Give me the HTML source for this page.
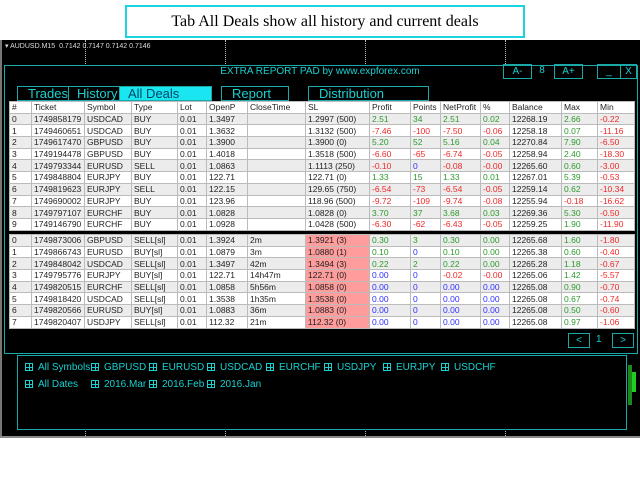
<!DOCTYPE html>
<html><head><style>
*{margin:0;padding:0;box-sizing:border-box}
body{width:640px;height:480px;background:#fff;position:relative;overflow:hidden;font-family:"Liberation Sans",sans-serif}
.a{position:absolute}
#cap{left:125px;top:5px;width:400px;height:33px;border:2px solid #19d4e0;font-family:"Liberation Serif",serif;font-size:16px;text-align:center;line-height:29px;color:#000}
#chart{left:0;top:40px;width:640px;height:398px;background:#000;border-left:2px solid #777}
.vd{width:0;border-left:1px dotted #bbb;top:40px;height:398px}
#panel{left:4px;top:65px;width:634px;height:289px;border:1px solid #1aa8a8}
.btn{border:1px solid #1aa8a8;color:#1ad0d0;font-size:10px;text-align:center;line-height:13px;height:15px}
.tab{top:86px;height:15px;border:1px solid #1aa8a8;color:#1ad0d0;font-size:13px;line-height:14px;padding-left:10px}
table{border-collapse:collapse;table-layout:fixed;font-size:8.5px;font-family:"Liberation Sans",sans-serif}
td{height:11.7px;border:1px solid #bbb;padding:0 2px;white-space:nowrap;overflow:hidden;line-height:10px;color:#222}
tr.g td{background:#ececec}
tr.w td{background:#fff}
.G{color:#2c9a2c!important}.R{color:#f02828!important}.B{color:#3030ff!important}
td.p{background:#ff9c9c!important}
.f{color:#1ad0d0;font-size:10px;top:0}
.ic{display:inline-block;width:8px;height:8px;border:1px solid #1ad0d0;position:relative;margin-right:5px;vertical-align:-1px}
.ic:before{content:"";position:absolute;left:2.5px;top:0;width:1px;height:6px;background:#1ad0d0}
.ic:after{content:"";position:absolute;top:2.5px;left:0;height:1px;width:6px;background:#1ad0d0}
</style></head><body>
<div class="a" id="cap">Tab All Deals show all history and current deals</div>
<div class="a" id="chart"></div>
<div class="a vd" style="left:85px"></div><div class="a vd" style="left:225px"></div><div class="a vd" style="left:365px"></div><div class="a vd" style="left:505px"></div>
<div class="a" style="left:5px;top:42px;color:#ddd;font-size:7px">▾ AUDUSD.M15&nbsp; 0.7142 0.7147 0.7142 0.7146</div>
<div class="a" style="left:0;top:436px;width:640px;height:2px;background:#888"></div>
<div class="a" style="left:628px;top:365px;width:4px;height:40px;background:#1a8a1a"></div>
<div class="a" style="left:632px;top:372px;width:4px;height:20px;background:#2c2"></div>
<div class="a" id="panel" style="background:#000"></div>
<div class="a" style="left:0;top:66px;width:640px;text-align:center;color:#1ad0d0;font-size:10px">EXTRA REPORT PAD by www.expforex.com</div>
<div class="a btn" style="left:503px;top:64px;width:29px">A-</div>
<div class="a" style="left:536px;top:65px;width:12px;color:#1ad0d0;font-size:10px;text-align:center">8</div>
<div class="a btn" style="left:554px;top:64px;width:29px">A+</div>
<div class="a btn" style="left:597px;top:64px;width:24px">_</div>
<div class="a btn" style="left:620px;top:64px;width:17px">X</div>
<div class="a tab" style="left:17px;width:52px">Trades</div>
<div class="a tab" style="left:68px;width:52px;padding-left:8px">History</div>
<div class="a tab" style="left:119px;width:93px;background:#19e6f0;color:#046;padding-left:8px">All Deals</div>
<div class="a tab" style="left:221px;width:68px">Report</div>
<div class="a tab" style="left:308px;width:121px">Distribution</div>
<div class="a" style="left:9px;top:101px;width:625px;height:229px;background:#000"></div>
<table class="a" style="left:9px;top:101px;width:625px">
<colgroup><col style="width:22px"><col style="width:53px"><col style="width:47px"><col style="width:46px"><col style="width:29px"><col style="width:41px"><col style="width:58px"><col style="width:64px"><col style="width:41px"><col style="width:30px"><col style="width:40px"><col style="width:29px"><col style="width:52px"><col style="width:36px"><col style="width:37px"></colgroup>
<tr class="w"><td>#</td><td>Ticket</td><td>Symbol</td><td>Type</td><td>Lot</td><td>OpenP</td><td>CloseTime</td><td>SL</td><td>Profit</td><td>Points</td><td>NetProfit</td><td>%</td><td>Balance</td><td>Max</td><td>Min</td></tr>
<tr class="g"><td>0</td><td>1749858179</td><td>USDCAD</td><td>BUY</td><td>0.01</td><td>1.3497</td><td></td><td>1.2997 (500)</td><td class="G">2.51</td><td class="G">34</td><td class="G">2.51</td><td class="G">0.02</td><td>12268.19</td><td class="G">2.66</td><td class="R">-0.22</td></tr>
<tr class="w"><td>1</td><td>1749460651</td><td>USDCAD</td><td>BUY</td><td>0.01</td><td>1.3632</td><td></td><td>1.3132 (500)</td><td class="R">-7.46</td><td class="R">-100</td><td class="R">-7.50</td><td class="R">-0.06</td><td>12258.18</td><td class="G">0.07</td><td class="R">-11.16</td></tr>
<tr class="g"><td>2</td><td>1749617470</td><td>GBPUSD</td><td>BUY</td><td>0.01</td><td>1.3900</td><td></td><td>1.3900 (0)</td><td class="G">5.20</td><td class="G">52</td><td class="G">5.16</td><td class="G">0.04</td><td>12270.84</td><td class="G">7.90</td><td class="R">-6.50</td></tr>
<tr class="w"><td>3</td><td>1749194478</td><td>GBPUSD</td><td>BUY</td><td>0.01</td><td>1.4018</td><td></td><td>1.3518 (500)</td><td class="R">-6.60</td><td class="R">-65</td><td class="R">-6.74</td><td class="R">-0.05</td><td>12258.94</td><td class="G">2.40</td><td class="R">-18.30</td></tr>
<tr class="g"><td>4</td><td>1749793344</td><td>EURUSD</td><td>SELL</td><td>0.01</td><td>1.0863</td><td></td><td>1.1113 (250)</td><td class="R">-0.10</td><td class="B">0</td><td class="R">-0.08</td><td class="R">-0.00</td><td>12265.60</td><td class="G">0.60</td><td class="R">-3.00</td></tr>
<tr class="w"><td>5</td><td>1749848804</td><td>EURJPY</td><td>BUY</td><td>0.01</td><td>122.71</td><td></td><td>122.71 (0)</td><td class="G">1.33</td><td class="G">15</td><td class="G">1.33</td><td class="G">0.01</td><td>12267.01</td><td class="G">5.39</td><td class="R">-0.53</td></tr>
<tr class="g"><td>6</td><td>1749819623</td><td>EURJPY</td><td>SELL</td><td>0.01</td><td>122.15</td><td></td><td>129.65 (750)</td><td class="R">-6.54</td><td class="R">-73</td><td class="R">-6.54</td><td class="R">-0.05</td><td>12259.14</td><td class="G">0.62</td><td class="R">-10.34</td></tr>
<tr class="w"><td>7</td><td>1749690002</td><td>EURJPY</td><td>BUY</td><td>0.01</td><td>123.96</td><td></td><td>118.96 (500)</td><td class="R">-9.72</td><td class="R">-109</td><td class="R">-9.74</td><td class="R">-0.08</td><td>12255.94</td><td class="R">-0.18</td><td class="R">-16.62</td></tr>
<tr class="g"><td>8</td><td>1749797107</td><td>EURCHF</td><td>BUY</td><td>0.01</td><td>1.0828</td><td></td><td>1.0828 (0)</td><td class="G">3.70</td><td class="G">37</td><td class="G">3.68</td><td class="G">0.03</td><td>12269.36</td><td class="G">5.30</td><td class="R">-0.50</td></tr>
<tr class="w"><td>9</td><td>1749146790</td><td>EURCHF</td><td>BUY</td><td>0.01</td><td>1.0928</td><td></td><td>1.0428 (500)</td><td class="R">-6.30</td><td class="R">-62</td><td class="R">-6.43</td><td class="R">-0.05</td><td>12259.25</td><td class="G">1.90</td><td class="R">-11.90</td></tr>
</table>
<table class="a" style="left:9px;top:234px;width:625px">
<colgroup><col style="width:22px"><col style="width:53px"><col style="width:47px"><col style="width:46px"><col style="width:29px"><col style="width:41px"><col style="width:58px"><col style="width:64px"><col style="width:41px"><col style="width:30px"><col style="width:40px"><col style="width:29px"><col style="width:52px"><col style="width:36px"><col style="width:37px"></colgroup>
<tr class="g"><td>0</td><td>1749873006</td><td>GBPUSD</td><td>SELL[sl]</td><td>0.01</td><td>1.3924</td><td>2m</td><td class="p">1.3921 (3)</td><td class="G">0.30</td><td class="G">3</td><td class="G">0.30</td><td class="G">0.00</td><td>12265.68</td><td class="G">1.60</td><td class="R">-1.80</td></tr>
<tr class="w"><td>1</td><td>1749866743</td><td>EURUSD</td><td>BUY[sl]</td><td>0.01</td><td>1.0879</td><td>3m</td><td class="p">1.0880 (1)</td><td class="G">0.10</td><td class="B">0</td><td class="G">0.10</td><td class="G">0.00</td><td>12265.38</td><td class="G">0.60</td><td class="R">-0.40</td></tr>
<tr class="g"><td>2</td><td>1749848042</td><td>USDCAD</td><td>SELL[sl]</td><td>0.01</td><td>1.3497</td><td>42m</td><td class="p">1.3494 (3)</td><td class="G">0.22</td><td class="G">2</td><td class="G">0.22</td><td class="G">0.00</td><td>12265.28</td><td class="G">1.18</td><td class="R">-0.67</td></tr>
<tr class="w"><td>3</td><td>1749795776</td><td>EURJPY</td><td>BUY[sl]</td><td>0.01</td><td>122.71</td><td>14h47m</td><td class="p">122.71 (0)</td><td class="B">0.00</td><td class="B">0</td><td class="R">-0.02</td><td class="R">-0.00</td><td>12265.06</td><td class="G">1.42</td><td class="R">-5.57</td></tr>
<tr class="g"><td>4</td><td>1749820515</td><td>EURCHF</td><td>SELL[sl]</td><td>0.01</td><td>1.0858</td><td>5h56m</td><td class="p">1.0858 (0)</td><td class="B">0.00</td><td class="B">0</td><td class="B">0.00</td><td class="B">0.00</td><td>12265.08</td><td class="G">0.90</td><td class="R">-0.70</td></tr>
<tr class="w"><td>5</td><td>1749818420</td><td>USDCAD</td><td>SELL[sl]</td><td>0.01</td><td>1.3538</td><td>1h35m</td><td class="p">1.3538 (0)</td><td class="B">0.00</td><td class="B">0</td><td class="B">0.00</td><td class="B">0.00</td><td>12265.08</td><td class="G">0.67</td><td class="R">-0.74</td></tr>
<tr class="g"><td>6</td><td>1749820566</td><td>EURUSD</td><td>BUY[sl]</td><td>0.01</td><td>1.0883</td><td>36m</td><td class="p">1.0883 (0)</td><td class="B">0.00</td><td class="B">0</td><td class="B">0.00</td><td class="B">0.00</td><td>12265.08</td><td class="G">0.50</td><td class="R">-0.60</td></tr>
<tr class="w"><td>7</td><td>1749820407</td><td>USDJPY</td><td>SELL[sl]</td><td>0.01</td><td>112.32</td><td>21m</td><td class="p">112.32 (0)</td><td class="B">0.00</td><td class="B">0</td><td class="B">0.00</td><td class="B">0.00</td><td>12265.08</td><td class="G">0.97</td><td class="R">-1.06</td></tr>
</table>
<div class="a btn" style="left:568px;top:333px;width:22px">&lt;</div>
<div class="a" style="left:596px;top:334px;color:#1ad0d0;font-size:10px">1</div>
<div class="a btn" style="left:612px;top:333px;width:22px">&gt;</div>
<div class="a" style="left:17px;top:355px;width:610px;height:75px;border:1px solid #1aa8a8;background:#000"></div>
<div class="a f" style="left:25px;top:362px"><span class="ic"></span>All Symbols</div>
<div class="a f" style="left:91px;top:362px"><span class="ic"></span>GBPUSD</div>
<div class="a f" style="left:149px;top:362px"><span class="ic"></span>EURUSD</div>
<div class="a f" style="left:207px;top:362px"><span class="ic"></span>USDCAD</div>
<div class="a f" style="left:266px;top:362px"><span class="ic"></span>EURCHF</div>
<div class="a f" style="left:324px;top:362px"><span class="ic"></span>USDJPY</div>
<div class="a f" style="left:383px;top:362px"><span class="ic"></span>EURJPY</div>
<div class="a f" style="left:441px;top:362px"><span class="ic"></span>USDCHF</div>
<div class="a f" style="left:25px;top:379px"><span class="ic"></span>All Dates</div>
<div class="a f" style="left:91px;top:379px"><span class="ic"></span>2016.Mar</div>
<div class="a f" style="left:149px;top:379px"><span class="ic"></span>2016.Feb</div>
<div class="a f" style="left:207px;top:379px"><span class="ic"></span>2016.Jan</div>
</body></html>
